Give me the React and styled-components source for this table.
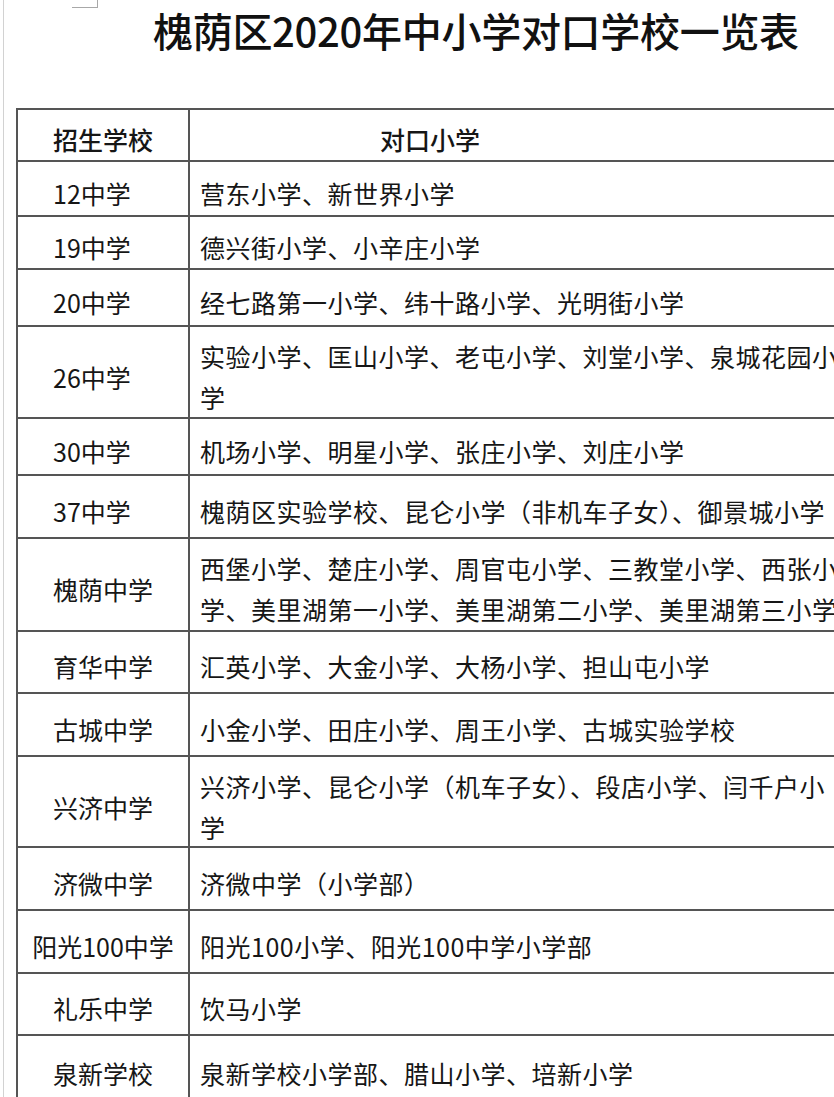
import React from "react";
import styled, { createGlobalStyle } from "styled-components";

const Global = createGlobalStyle`
  html, body {
    margin: 0;
    padding: 0;
    background: #ffffff;
    overflow: hidden;
  }
  body {
    font-family: "Noto Sans CJK SC", "Noto Sans", sans-serif;
    color: #161616;
  }
`;

const Sheet = styled.div`
  margin-left: 3px;
  min-height: 1097px;
  border-left: 1px solid #d2d2d2;
  display: flex;
  flex-direction: column;
`;

const CornerMark = styled.div`
  margin-left: 68px;
  width: 26px;
  height: 8px;
  box-sizing: border-box;
  border-right: 1px solid #a8a8a8;
  border-bottom: 1px solid #a8a8a8;
`;

const Title = styled.h1`
  margin: 2px 0 0 0;
  padding-left: 149px;
  font-size: 40px;
  line-height: 40px;
  font-weight: 500;
  letter-spacing: -0.3px;
  color: #111;
  white-space: nowrap;
`;

const Table = styled.div`
  margin: 58px 0 0 12px;
  width: 900px;
  border-top: 2px solid #555;
  border-left: 2px solid #555;
  display: flex;
  flex-direction: column;
`;

const Row = styled.div`
  display: grid;
  grid-template-columns: 172px 1fr;
  height: ${(p) => p.$h}px;
  box-sizing: border-box;
  border-bottom: 2px solid #555;
`;

const NameCell = styled.div`
  box-sizing: border-box;
  border-right: 2px solid #555;
  padding-top: 9px;
  display: flex;
  align-items: center;
  justify-content: center;
  font-size: 25px;
  line-height: 41px;
  font-weight: ${(p) => (p.$head ? 500 : 400)};
`;

const Label = styled.span`
  min-width: 100px;
  text-align: left;
  white-space: nowrap;
`;

const SchoolCell = styled.div`
  box-sizing: border-box;
  padding: 9px 0 0 ${(p) => (p.$head ? 190 : 10)}px;
  display: flex;
  align-items: center;
  font-size: 25px;
  line-height: 41px;
  font-weight: ${(p) => (p.$head ? 500 : 400)};
`;

const SchoolText = styled.span`
  width: 650px;
  letter-spacing: 0.5px;
  word-break: break-all;
`;

const rows = [
  { name: "12中学", schools: "营东小学、新世界小学", h: 55 },
  { name: "19中学", schools: "德兴街小学、小辛庄小学", h: 53 },
  { name: "20中学", schools: "经七路第一小学、纬十路小学、光明街小学", h: 57 },
  { name: "26中学", schools: "实验小学、匡山小学、老屯小学、刘堂小学、泉城花园小学", h: 92 },
  { name: "30中学", schools: "机场小学、明星小学、张庄小学、刘庄小学", h: 57 },
  { name: "37中学", schools: "槐荫区实验学校、昆仑小学（非机车子女）、御景城小学", h: 63 },
  {
    name: "槐荫中学",
    schools: "西堡小学、楚庄小学、周官屯小学、三教堂小学、西张小学、美里湖第一小学、美里湖第二小学、美里湖第三小学",
    h: 93,
  },
  { name: "育华中学", schools: "汇英小学、大金小学、大杨小学、担山屯小学", h: 62 },
  { name: "古城中学", schools: "小金小学、田庄小学、周王小学、古城实验学校", h: 63 },
  { name: "兴济中学", schools: "兴济小学、昆仑小学（机车子女）、段店小学、闫千户小学", h: 91 },
  { name: "济微中学", schools: "济微中学（小学部）", h: 63 },
  { name: "阳光100中学", schools: "阳光100小学、阳光100中学小学部", h: 63 },
  { name: "礼乐中学", schools: "饮马小学", h: 62 },
  { name: "泉新学校", schools: "泉新学校小学部、腊山小学、培新小学", h: 68 },
];

export default function App() {
  return (
    <>
      <Global />
      <Sheet>
        <CornerMark />
        <Title>槐荫区2020年中小学对口学校一览表</Title>
        <Table>
          <Row $h={52}>
            <NameCell $head>
              <Label>招生学校</Label>
            </NameCell>
            <SchoolCell $head>对口小学</SchoolCell>
          </Row>
          {rows.map((r) => (
            <Row key={r.name} $h={r.h}>
              <NameCell>
                <Label>{r.name}</Label>
              </NameCell>
              <SchoolCell>
                <SchoolText>{r.schools}</SchoolText>
              </SchoolCell>
            </Row>
          ))}
        </Table>
      </Sheet>
    </>
  );
}
